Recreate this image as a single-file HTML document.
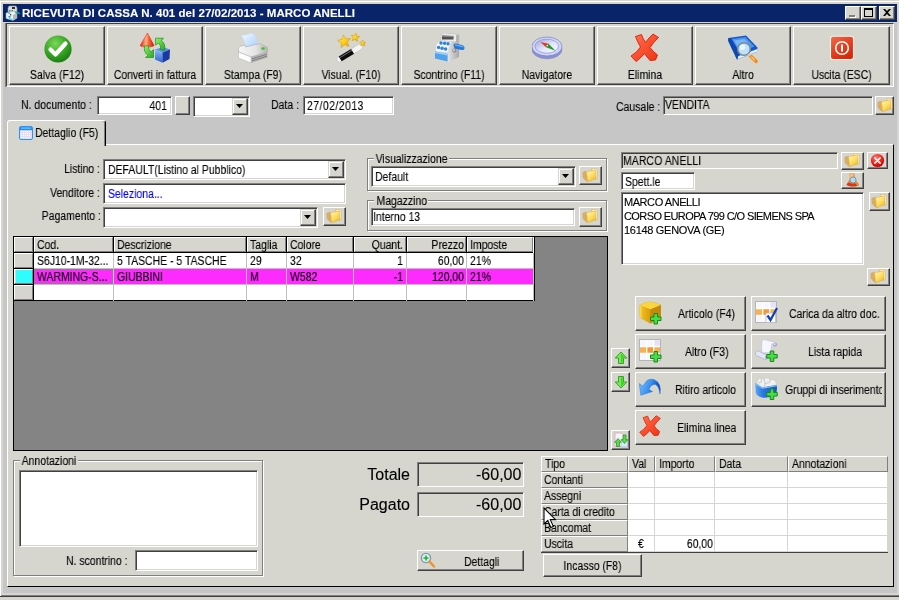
<!DOCTYPE html>
<html><head><meta charset="utf-8"><title>Ricevuta di cassa</title>
<style>
html,body{margin:0;padding:0;}
body{width:899px;height:600px;overflow:hidden;background:#d6d6ce;font-family:"Liberation Sans",sans-serif;font-size:12.5px;color:#000;position:relative;}
*{box-sizing:border-box;}
.a{position:absolute;}
.t{position:absolute;white-space:nowrap;line-height:13px;height:13px;}
.t,.gbl{transform:scaleX(.836);transform-origin:0 0;will-change:transform;-webkit-text-stroke:.12px currentColor;}
.r{text-align:right;transform-origin:100% 0;}
.c{transform-origin:50% 0;text-align:center;}
.btn{position:absolute;background:#d6d6ce;border:1px solid;border-color:#fff #404040 #404040 #fff;box-shadow:inset -1px -1px 0 #808080;}
.sk{position:absolute;background:#fff;border:1px solid;border-color:#808080 #fff #fff #808080;box-shadow:inset 1px 1px 0 #404040,inset -1px -1px 0 #d6d6ce;}
.sk.g{background:#d6d6ce;}
.gb{position:absolute;border:1px solid #808080;box-shadow:1px 1px 0 #fff,inset 1px 1px 0 #fff;}
.gbl{position:absolute;background:#d6d6ce;white-space:nowrap;line-height:13px;height:13px;padding:0 2px;}
.dd{position:absolute;background:#d6d6ce;border:1px solid;border-color:#d6d6ce #404040 #404040 #d6d6ce;box-shadow:inset -1px -1px 0 #808080,inset 1px 1px 0 #fff;}
.dd:after{content:"";position:absolute;left:3px;top:5px;width:7px;height:4px;background:#000;clip-path:polygon(0 0,100% 0,50% 100%);}
.tb{position:absolute;top:26px;height:59px;width:96px;}
.tb .t{top:42px;left:-20px;right:-20px;text-align:center;transform-origin:50% 0;}
.tb svg{position:absolute;left:32px;top:6px;}
</style></head><body>
<!-- window frame -->
<div class="a" style="left:-1px;top:0;width:902px;height:597px;border:1px solid #d6d6ce;border-bottom-color:#404040;box-shadow:inset 1px 1px 0 #fff,inset 0 -1px 0 #808080;"></div>
<!-- form bg -->
<div class="a" style="left:3px;top:23px;width:894px;height:570px;background:#c6c6c6;"></div>
<!-- title bar -->
<div class="a" id="title" style="left:3px;top:4px;width:894px;height:18px;background:#0a246a;"></div>
<div class="t" id="ttxt" style="left:22px;top:6px;height:14px;line-height:14px;color:#fff;font-weight:bold;font-size:11.5px;letter-spacing:0.04px;transform:none;">RICEVUTA DI CASSA N. 401 del 27/02/2013 - MARCO ANELLI</div>
<svg class="a" style="left:5px;top:5px" width="16" height="16" viewBox="0 0 16 16"><path d="M4 1 h7 l1 2 v4 h-9 v-4z" fill="#dcdcdc" stroke="#9a9a9a" stroke-width=".6"/><rect x="7" y="2" width="3" height="2" fill="#303030"/><path d="M1 8 L8 6 L12 8 V13 L8 15.500 L1 13.500Z" fill="#f0f0f0" stroke="#a0a0a0" stroke-width=".5"/><path d="M8 10 L12 8 V13 L8 15.500Z" fill="#b8b8b8"/><g fill="#18a0a0"><rect x="4" y="5" width="1.500" height="1.200"/><rect x="6.500" y="5" width="1.500" height="1.200"/><rect x="3.500" y="7.500" width="1.500" height="1.200"/><rect x="5" y="9" width="1.200" height="1.500" fill="#1830a0"/></g><path d="M10.500 6.500 h2 l2.500 1.500 v1.500 l-2 -1 h-2.500z" fill="#18a0a0"/><path d="M3.500 11 h2 v1.500 h-2z" fill="#2090d0"/><path d="M4 13 l3.500 .8 v1.200 l-3.500 -.8z" fill="#20f0f0"/></svg>
<!-- caption buttons -->
<div class="btn" style="left:845px;top:6px;width:16px;height:14px;"><div class="a" style="left:3px;top:8px;width:6px;height:2px;background:#808080;box-shadow:1px 1px 0 #fff"></div></div>
<div class="btn" style="left:861px;top:6px;width:16px;height:14px;"><div class="a" style="left:2px;top:1px;width:9px;height:9px;border:1px solid #000;border-top-width:2px;"></div></div>
<div class="btn" style="left:879px;top:6px;width:16px;height:14px;"><svg class="a" style="left:3px;top:2px" width="8" height="7" viewBox="0 0 8 7"><path d="M0 0h2l2 2l2-2h2l-3 3.5l3 3.5h-2l-2-2l-2 2h-2l3-3.5z" fill="#000"/></svg></div>

<!-- toolbar container -->
<div class="a" id="tbar" style="left:6px;top:23px;width:888px;height:64px;background:#d6d6ce;border:1px solid;border-color:#404040 #fff #fff #404040;box-shadow:-1px 0 0 #808080;"></div>
<div class="btn tb" style="left:9px;width:96px;"><svg class="a" style="" width="32" height="32" viewBox="0 0 32 32"><defs><radialGradient id="gs" cx=".4" cy=".3" r=".8"><stop offset="0" stop-color="#7ad85a"/><stop offset=".6" stop-color="#2f9e1e"/><stop offset="1" stop-color="#16700e"/></radialGradient></defs>
<circle cx="16" cy="16" r="13.6" fill="url(#gs)"/><path d="M8.5 16.5 L13.5 21.5 L23.5 10.5" fill="none" stroke="#fff" stroke-width="4.2" stroke-linecap="round" stroke-linejoin="round"/></svg><div class="t">Salva (F12)</div></div>
<div class="btn tb" style="left:107px;width:96px;"><svg class="a" style="" width="32" height="32" viewBox="0 0 32 32"><defs><linearGradient id="cr" x1="0" y1="0" x2="1" y2="0"><stop offset="0" stop-color="#e61a08"/><stop offset=".42" stop-color="#ffb488"/><stop offset=".6" stop-color="#ff6a3c"/><stop offset="1" stop-color="#d21000"/></linearGradient>
<linearGradient id="cg" x1="0" y1="0" x2="1" y2="1"><stop offset="0" stop-color="#98f268"/><stop offset="1" stop-color="#22a822"/></linearGradient>
<linearGradient id="cb" x1="0" y1="0" x2="0" y2="1"><stop offset="0" stop-color="#8cbcf8"/><stop offset="1" stop-color="#2e62d2"/></linearGradient></defs>
<path d="M7.400 0 L14 12.300 Q14 14 7 14 Q0 14 .3 12.300 Z" fill="url(#cr)" stroke="#d82010" stroke-width=".5"/>
<path d="M15 16.500 L23 14 L30 16.500 L22.500 19.500 Z" fill="#5a92ec"/><path d="M15 16.500 L22.500 19.500 V29.700 L15 26.500 Z" fill="url(#cb)"/><path d="M22.500 19.500 L30 16.500 L29.500 26 L22.500 29.700 Z" fill="#1838a2"/>
<path d="M15.500 5.200 H23.500 L21.500 7.500 Q26 11 24.500 17.500 L20.500 16.500 Q21.500 12.500 18.500 10 L15.500 12 Z" fill="url(#cg)" stroke="#189418" stroke-width=".7"/>
<path d="M13.500 24.500 H5.500 L7.800 22.300 Q3.500 19 4.500 13 L8.500 12.500 Q8 16.500 11 19 L13.500 16.500 Z" fill="url(#cg)" stroke="#189418" stroke-width=".7"/></svg><div class="t">Converti in fattura</div></div>
<div class="btn tb" style="left:205px;width:96px;"><svg class="a" style="" width="32" height="32" viewBox="0 0 32 32"><defs><linearGradient id="pp" x1="0" y1="0" x2="1" y2="1"><stop offset="0" stop-color="#f4faff"/><stop offset="1" stop-color="#a8d0f6"/></linearGradient>
<linearGradient id="pt" x1="0" y1="0" x2="1" y2="0"><stop offset="0" stop-color="#f6f6f6"/><stop offset=".6" stop-color="#e4e4e4"/><stop offset="1" stop-color="#b4b4b4"/></linearGradient></defs>
<path d="M3 2.500 Q8 2 13 0 Q19 .5 20 11 L7.500 14 Q6 6 3 2.500 Z" fill="url(#pp)" stroke="#c4d4e4" stroke-width=".5"/>
<path d="M.5 15 Q.5 13.500 3 13 L7 12 L7.500 14 L20 11 L21 10.500 Q26 12 29.500 14.500 V19 L13 24 L.5 19 Z" fill="url(#pt)" stroke="#a4a4a4" stroke-width=".5"/>
<path d="M.5 19 L13 24 V30 L.5 25 Z" fill="#fdfdfd" stroke="#b0b0b0" stroke-width=".5"/>
<path d="M13 24 L29.500 19 V24.500 L13 30 Z" fill="#b2b2b2"/><path d="M14 25.800 L29 21.300 M14 27.800 L29 23.200" stroke="#7a7a7a" stroke-width=".9"/>
<ellipse cx="25" cy="15.500" rx="1.900" ry="1.200" fill="#3cc42c"/></svg><div class="t">Stampa (F9)</div></div>
<div class="btn tb" style="left:303px;width:96px;"><svg class="a" style="" width="32" height="32" viewBox="0 0 32 32"><defs><linearGradient id="ws" x1="0" y1="0" x2="1" y2="1"><stop offset="0" stop-color="#fff27a"/><stop offset=".5" stop-color="#ffd21a"/><stop offset="1" stop-color="#e09a00"/></linearGradient></defs>
<g transform="rotate(-31.500 2.500 27)"><rect x="1" y="24.200" width="29" height="5.600" rx="2.600" fill="#f4f4f4" stroke="#b8b8b8" stroke-width=".5"/><rect x="4.500" y="24.200" width="14.500" height="5.600" fill="#0c0c0c"/><rect x="4.500" y="25.200" width="14.500" height="1" fill="#6a6a6a"/></g>
<path d="M7.4 1.9 L9.7 5.9 L14.4 5.6 L11.3 9.1 L13.0 13.5 L8.7 11.6 L5.1 14.6 L5.5 9.9 L1.6 7.4 L6.2 6.4Z" fill="url(#ws)" stroke="#d89a00" stroke-width=".6"/>
<path d="M19.9 -0.1 L20.7 2.9 L23.7 3.6 L21.1 5.3 L21.4 8.4 L19.0 6.4 L16.2 7.6 L17.3 4.8 L15.3 2.4 L18.3 2.6Z" fill="url(#ws)" stroke="#d89a00" stroke-width=".6"/>
<path d="M26.7 7.0 L27.6 9.1 L29.8 9.3 L28.1 10.8 L28.6 13.0 L26.7 11.8 L24.8 13.0 L25.3 10.8 L23.6 9.3 L25.8 9.1Z" fill="url(#ws)" stroke="#d89a00" stroke-width=".5"/></svg><div class="t">Visual. (F10)</div></div>
<div class="btn tb" style="left:401px;width:96px;"><svg class="a" style="" width="32" height="32" viewBox="0 0 32 32"><defs><linearGradient id="kb" x1="0" y1="0" x2="1" y2="0"><stop offset="0" stop-color="#e4e4e4"/><stop offset="1" stop-color="#a6a6a6"/></linearGradient></defs>
<path d="M7 1.500 L10 0 L25 1.500 V10 L22 9 L7 8 Z" fill="#ececec" stroke="#b4b4b4" stroke-width=".5"/><path d="M22 2 L25 1.500 V10 L22 9 Z" fill="#b4b4b4"/>
<path d="M8 2.600 L19.500 3.100 V6.600 L8 6.400 Z" fill="#505050"/><path d="M8 2.600 L19.500 3.100 V4.200 L8 3.800 Z" fill="#8a8a8a"/>
<path d="M14 20 Q15 12 18 9 L22 9 L25 10 V24 L14 29 Z" fill="url(#kb)"/>
<path d="M2 12 Q4 8 8 7.500 L18 9 Q15 12 14 20 L1.500 18.500 Z" fill="#f4f4f4" stroke="#c4c4c4" stroke-width=".4"/>
<g fill="#2a82e4"><circle cx="7" cy="10" r="1.700"/><circle cx="10.600" cy="10.200" r="1.700"/><circle cx="14" cy="10.800" r="1.700"/><circle cx="4.600" cy="14.400" r="1.700"/><circle cx="8.100" cy="15.300" r="1.700"/><circle cx="11.600" cy="16" r="1.700"/></g>
<path d="M1 18.500 L13.500 21 V28.500 L1 25.500 Z" fill="#4ea2ee"/><path d="M1 18.500 L13.500 21 V22.600 L1 20 Z" fill="#9cd0ff"/>
<circle cx="20.300" cy="17.600" r="2.100" fill="#8e8e8e"/><circle cx="19.900" cy="17.200" r="1" fill="#dcdcdc"/>
<path d="M19.500 12 Q19.500 10.500 21.500 10.500 L28 12 Q30.800 13 30.500 15.500 Q30 17.500 27.500 17 L20.500 15.500 Z" fill="#2a78d6"/><path d="M21 11.300 L28 12.800 Q29.500 13.400 29.600 14.400 L21 12.600 Z" fill="#6ab0f4"/></svg><div class="t">Scontrino (F11)</div></div>
<div class="btn tb" style="left:499px;width:96px;"><svg class="a" style="" width="32" height="32" viewBox="0 0 32 32"><defs><linearGradient id="nv" x1="0" y1="0" x2="1" y2="1"><stop offset="0" stop-color="#9ea2d8"/><stop offset=".55" stop-color="#e4e6fc"/><stop offset="1" stop-color="#fafaff"/></linearGradient></defs>
<ellipse cx="15" cy="16.300" rx="15" ry="9.500" fill="#8a90d4" stroke="#6a70c0" stroke-width=".5"/><ellipse cx="15" cy="13.500" rx="15" ry="9.500" fill="#d0d4f6" stroke="#7a80c8" stroke-width=".7"/>
<ellipse cx="14.700" cy="13.200" rx="11.800" ry="7" fill="url(#nv)" stroke="#8a90cc" stroke-width=".7"/>
<path d="M8.500 9 L16.500 10.800 L14 14.300 Z" fill="#e8341e"/><path d="M23.500 17.800 L16.500 10.800 L14 14.300 Z" fill="#1e9a26"/><circle cx="15.300" cy="12.500" r=".8" fill="#f4f4f4"/></svg><div class="t">Navigatore</div></div>
<div class="btn tb" style="left:597px;width:96px;"><svg class="a" style="" width="32" height="32" viewBox="0 0 32 32"><defs><linearGradient id="bx" x1="0" y1="0" x2="1" y2="1"><stop offset="0" stop-color="#ff7452"/><stop offset=".5" stop-color="#fa5030"/><stop offset="1" stop-color="#ea3412"/></linearGradient></defs>
<path d="M5.500 3.500 L11.500 1.500 Q13 6 15.500 9.500 Q19 4.500 23 1 L28.500 4.500 Q23.500 9 20 14.500 Q23 18.500 27.500 22 L25.500 27 L20 27.500 Q17 24 14.500 20.500 Q10.500 25.500 6 28.500 L1 23 Q7 19.500 10.500 14 Q7.500 9 5.500 3.500 Z" fill="url(#bx)" stroke="#d81c08" stroke-width=".9" stroke-linejoin="round"/></svg><div class="t">Elimina</div></div>
<div class="btn tb" style="left:695px;width:96px;"><svg class="a" style="" width="32" height="32" viewBox="0 0 32 32"><path d="M.3 5 L18 2.500 L29.500 14.500 L29 19 L9 26.500 L.3 8 Z" fill="#1458c8"/><path d="M3.500 6 L17.500 4 L26.500 13.500 L11.500 19.500 Z" fill="#4a94f0"/><path d="M6 7.500 L16.500 6 L22 12 L11 16 Z" fill="#78b4f8"/><path d="M10 23.300 L29.300 16 V18.700 L9.500 26.300Z" fill="#e4ecf8"/><path d="M.3 5 L3.500 6 L11.500 19.500 L9 26.500 L.3 8Z" fill="#0e48b0"/>
<circle cx="16" cy="16" r="6.300" fill="#bfe2f8" stroke="#7c8894" stroke-width="1.500"/><circle cx="14.500" cy="14.300" r="2.800" fill="#e8f6ff"/>
<path d="M21.800 22.300 L28 28.300" stroke="#f48a1a" stroke-width="3.600" stroke-linecap="round"/><path d="M23.300 23.800 L26.800 27.200" stroke="#ffd27a" stroke-width="1.200"/><path d="M20.600 20.900 L22.400 22.700" stroke="#d0d0d0" stroke-width="3.200"/></svg><div class="t">Altro</div></div>
<div class="btn tb" style="left:793px;width:97px;"><svg class="a" style="" width="32" height="32" viewBox="0 0 32 32"><defs><linearGradient id="ex" x1="0" y1="0" x2=".6" y2="1"><stop offset="0" stop-color="#f26c4c"/><stop offset=".5" stop-color="#e64424"/><stop offset="1" stop-color="#d62a0a"/></linearGradient></defs>
<rect x="4.500" y="3.300" width="23" height="23.200" rx="2.500" fill="url(#ex)" stroke="#fdf4f0" stroke-width="1.100"/><circle cx="16" cy="15" r="6.300" fill="none" stroke="#fff" stroke-width="1.600"/><rect x="15" y="11.500" width="2" height="7" fill="#fff"/></svg><div class="t">Uscita (ESC)</div></div>
<!-- doc row -->
<div class="t" style="left:21px;top:99px;">N. documento :</div>
<div class="sk" style="left:97px;top:96px;width:75px;height:19px;"><div class="t r" style="right:4px;top:3px;">401</div></div>
<div class="btn" style="left:175px;top:96px;width:15px;height:19px;"></div>
<div class="sk" style="left:193px;top:96px;width:57px;height:21px;"><div class="dd" style="right:1px;top:1px;width:16px;height:17px;"></div></div>
<div class="t" style="left:271px;top:99px;">Data :</div>
<div class="sk" style="left:303px;top:96px;width:91px;height:19px;"><div class="t" style="left:3px;top:3px;letter-spacing:.55px">27/02/2013</div></div>
<div class="t" style="left:616px;top:101px;">Causale :</div>
<div class="sk g" style="left:663px;top:96px;width:210px;height:19px;box-shadow:inset 1px 1px 0 #404040;"><div class="t" style="left:1px;top:2px;">VENDITA</div></div>
<div class="btn" style="left:875px;top:96px;width:19px;height:19px;"><svg class="a" style="left:1px;top:1px" width="16" height="16" viewBox="0 0 16 16"><defs><linearGradient id="fgx1" x1="0" y1="0" x2=".7" y2="1"><stop offset="0" stop-color="#fff8b4"/><stop offset=".55" stop-color="#fbe068"/><stop offset="1" stop-color="#f0bc30"/></linearGradient></defs>
<path d="M9.500 .6 L15 1.100 L15.200 10.500 L13.500 11.200 Z" fill="#fffbe8" stroke="#dc9a28" stroke-width=".5"/>
<path d="M.6 4.600 L3 3 L4.500 3.600 L5.500 13.800 L3 12 L1 9.500 Z" fill="#deae50" stroke="#b4a4e8" stroke-width=".4"/>
<path d="M4.500 3.600 L13.500 2 L14 10.600 L5.500 13.800 Z" fill="url(#fgx1)" stroke="#dca42c" stroke-width=".5"/></svg></div>

<!-- tab pane -->
<div class="a" id="pane" style="left:7px;top:144px;width:887px;height:443px;background:#d6d6ce;border:1px solid;border-color:#fff #000 #000 #fff;"></div>
<!-- tab -->
<div class="a" id="tab" style="left:7px;top:120px;width:99px;height:26px;background:#d6d6ce;border:1px solid;border-color:#fff #000 #d6d6ce #fff;border-bottom:0;border-radius:3px 3px 0 0;box-shadow:inset -1px 0 0 #808080;"></div>
<div class="t" style="left:35px;top:127px;">Dettaglio (F5)</div>
<svg class="a" style="left:19px;top:126px" width="14" height="14" viewBox="0 0 14 14"><rect x=".5" y=".5" width="13" height="13" rx="1.5" fill="#e6dcf6" stroke="#2492ff"/><rect x="1" y="1" width="12" height="3.2" fill="#1e8cff"/><rect x="2" y="1.6" width="10" height="1" fill="#9cd0ff"/>
<g fill="#fff"><rect x="2" y="5" width="1" height="1"/><rect x="4" y="5" width="1" height="1"/><rect x="6" y="5" width="1" height="1"/><rect x="8" y="5" width="1" height="1"/><rect x="10" y="5" width="1" height="1"/>
<rect x="2" y="7" width="1" height="1"/><rect x="4" y="7" width="1" height="1"/><rect x="6" y="7" width="1" height="1"/><rect x="8" y="7" width="1" height="1"/><rect x="10" y="7" width="1" height="1"/>
<rect x="2" y="9" width="1" height="1"/><rect x="4" y="9" width="1" height="1"/><rect x="6" y="9" width="1" height="1"/><rect x="8" y="9" width="1" height="1"/><rect x="10" y="9" width="1" height="1"/>
<rect x="2" y="11" width="1" height="1"/><rect x="4" y="11" width="1" height="1"/><rect x="6" y="11" width="1" height="1"/><rect x="8" y="11" width="1" height="1"/><rect x="10" y="11" width="1" height="1"/></g></svg>

<!-- left fields -->
<div class="t r" style="left:20px;width:80px;top:163px;">Listino :</div>
<div class="sk" style="left:103px;top:159px;width:243px;height:21px;"><div class="t" style="left:4px;top:4px;">DEFAULT(Listino al Pubblico)</div><div class="dd" style="right:1px;top:1px;width:16px;height:17px;"></div></div>
<div class="t r" style="left:20px;width:80px;top:187px;">Venditore :</div>
<div class="sk" style="left:103px;top:183px;width:243px;height:21px;"><div class="t" style="left:4px;top:4px;color:#0000ff;">Seleziona...</div></div>
<div class="t r" style="left:20px;width:81px;top:210px;">Pagamento :</div>
<div class="sk" style="left:103px;top:207px;width:215px;height:21px;"><div class="dd" style="right:1px;top:1px;width:16px;height:17px;"></div></div>
<div class="btn" style="left:323px;top:207px;width:23px;height:19px;"><svg class="a" style="left:2px;top:1px" width="16" height="16" viewBox="0 0 16 16"><defs><linearGradient id="fgx2" x1="0" y1="0" x2=".7" y2="1"><stop offset="0" stop-color="#fff8b4"/><stop offset=".55" stop-color="#fbe068"/><stop offset="1" stop-color="#f0bc30"/></linearGradient></defs>
<path d="M9.500 .6 L15 1.100 L15.200 10.500 L13.500 11.200 Z" fill="#fffbe8" stroke="#dc9a28" stroke-width=".5"/>
<path d="M.6 4.600 L3 3 L4.500 3.600 L5.500 13.800 L3 12 L1 9.500 Z" fill="#deae50" stroke="#b4a4e8" stroke-width=".4"/>
<path d="M4.500 3.600 L13.500 2 L14 10.600 L5.500 13.800 Z" fill="url(#fgx2)" stroke="#dca42c" stroke-width=".5"/></svg></div>

<!-- group boxes -->
<div class="gb" style="left:367px;top:158px;width:240px;height:33px;"></div>
<div class="gbl" style="left:374px;top:153px;">Visualizzazione</div>
<div class="sk" style="left:371px;top:166px;width:205px;height:21px;"><div class="t" style="left:3px;top:4px;">Default</div><div class="dd" style="right:1px;top:1px;width:16px;height:17px;"></div></div>
<div class="btn" style="left:579px;top:166px;width:23px;height:19px;"><svg class="a" style="left:2px;top:1px" width="16" height="16" viewBox="0 0 16 16"><defs><linearGradient id="fgx3" x1="0" y1="0" x2=".7" y2="1"><stop offset="0" stop-color="#fff8b4"/><stop offset=".55" stop-color="#fbe068"/><stop offset="1" stop-color="#f0bc30"/></linearGradient></defs>
<path d="M9.500 .6 L15 1.100 L15.200 10.500 L13.500 11.200 Z" fill="#fffbe8" stroke="#dc9a28" stroke-width=".5"/>
<path d="M.6 4.600 L3 3 L4.500 3.600 L5.500 13.800 L3 12 L1 9.500 Z" fill="#deae50" stroke="#b4a4e8" stroke-width=".4"/>
<path d="M4.500 3.600 L13.500 2 L14 10.600 L5.500 13.800 Z" fill="url(#fgx3)" stroke="#dca42c" stroke-width=".5"/></svg></div>
<div class="gb" style="left:367px;top:200px;width:240px;height:31px;"></div>
<div class="gbl" style="left:374px;top:195px;padding:0 2px 0 3px">Magazzino</div>
<div class="sk" style="left:371px;top:208px;width:204px;height:18px;"><div class="t" style="left:1px;top:2px;">Interno 13</div></div>
<div class="btn" style="left:579px;top:207px;width:23px;height:20px;"><svg class="a" style="left:2px;top:1px" width="16" height="16" viewBox="0 0 16 16"><defs><linearGradient id="fgx4" x1="0" y1="0" x2=".7" y2="1"><stop offset="0" stop-color="#fff8b4"/><stop offset=".55" stop-color="#fbe068"/><stop offset="1" stop-color="#f0bc30"/></linearGradient></defs>
<path d="M9.500 .6 L15 1.100 L15.200 10.500 L13.500 11.200 Z" fill="#fffbe8" stroke="#dc9a28" stroke-width=".5"/>
<path d="M.6 4.600 L3 3 L4.500 3.600 L5.500 13.800 L3 12 L1 9.500 Z" fill="#deae50" stroke="#b4a4e8" stroke-width=".4"/>
<path d="M4.500 3.600 L13.500 2 L14 10.600 L5.500 13.800 Z" fill="url(#fgx4)" stroke="#dca42c" stroke-width=".5"/></svg></div>

<div class="a" style="left:13px;top:236px;width:595px;height:215px;background:#848484;border:1px solid #000;"></div>
<div class="a" style="left:13px;top:236px;width:522px;height:65px;background:#fff;border:1px solid #000;"></div>
<div class="a" style="left:14px;top:237px;width:19px;height:15px;background:#d6d6ce;border:1px solid;border-color:#fff #808080 #808080 #fff;"></div>
<div class="a" style="left:33px;top:237px;width:1px;height:15px;background:#000;"></div>
<div class="a" style="left:34px;top:237px;width:79px;height:15px;background:#d6d6ce;border:1px solid;border-color:#fff #808080 #808080 #fff;"></div>
<div class="a" style="left:113px;top:237px;width:1px;height:15px;background:#000;"></div>
<div class="t" style="left:37px;top:239px;">Cod.</div>
<div class="a" style="left:114px;top:237px;width:132px;height:15px;background:#d6d6ce;border:1px solid;border-color:#fff #808080 #808080 #fff;"></div>
<div class="a" style="left:246px;top:237px;width:1px;height:15px;background:#000;"></div>
<div class="t" style="left:117px;top:239px;">Descrizione</div>
<div class="a" style="left:247px;top:237px;width:39px;height:15px;background:#d6d6ce;border:1px solid;border-color:#fff #808080 #808080 #fff;"></div>
<div class="a" style="left:286px;top:237px;width:1px;height:15px;background:#000;"></div>
<div class="t" style="left:250px;top:239px;">Taglia</div>
<div class="a" style="left:287px;top:237px;width:66px;height:15px;background:#d6d6ce;border:1px solid;border-color:#fff #808080 #808080 #fff;"></div>
<div class="a" style="left:353px;top:237px;width:1px;height:15px;background:#000;"></div>
<div class="t" style="left:290px;top:239px;">Colore</div>
<div class="a" style="left:354px;top:237px;width:52px;height:15px;background:#d6d6ce;border:1px solid;border-color:#fff #808080 #808080 #fff;"></div>
<div class="a" style="left:406px;top:237px;width:1px;height:15px;background:#000;"></div>
<div class="t r" style="left:354px;width:49px;top:239px;">Quant.</div>
<div class="a" style="left:407px;top:237px;width:59px;height:15px;background:#d6d6ce;border:1px solid;border-color:#fff #808080 #808080 #fff;"></div>
<div class="a" style="left:466px;top:237px;width:1px;height:15px;background:#000;"></div>
<div class="t r" style="left:407px;width:57px;top:239px;">Prezzo</div>
<div class="a" style="left:467px;top:237px;width:66px;height:15px;background:#d6d6ce;border:1px solid;border-color:#fff #808080 #808080 #fff;"></div>
<div class="t" style="left:470px;top:239px;">Imposte</div>
<div class="a" style="left:14px;top:252px;width:519px;height:1px;background:#000;"></div>
<div class="a" style="left:14px;top:253px;width:19px;height:15px;background:#d6d6ce;border:1px solid;border-color:#fff #808080 #808080 #fff;"></div>
<div class="a" style="left:33px;top:253px;width:1px;height:16px;background:#000;"></div>
<div class="a" style="left:14px;top:268px;width:19px;height:1px;background:#000;"></div>
<div class="a" style="left:113px;top:253px;width:1px;height:16px;background:#c0c0c0;"></div>
<div class="t" style="left:37px;top:255px;">S6J10-1M-32...</div>
<div class="a" style="left:246px;top:253px;width:1px;height:16px;background:#c0c0c0;"></div>
<div class="t" style="left:117px;top:255px;">5 TASCHE - 5 TASCHE</div>
<div class="a" style="left:286px;top:253px;width:1px;height:16px;background:#c0c0c0;"></div>
<div class="t" style="left:250px;top:255px;">29</div>
<div class="a" style="left:353px;top:253px;width:1px;height:16px;background:#c0c0c0;"></div>
<div class="t" style="left:290px;top:255px;">32</div>
<div class="a" style="left:406px;top:253px;width:1px;height:16px;background:#c0c0c0;"></div>
<div class="t r" style="left:354px;width:49px;top:255px;">1</div>
<div class="a" style="left:466px;top:253px;width:1px;height:16px;background:#c0c0c0;"></div>
<div class="t r" style="left:407px;width:57px;top:255px;">60,00</div>
<div class="a" style="left:533px;top:253px;width:1px;height:16px;background:#c0c0c0;"></div>
<div class="t" style="left:470px;top:255px;">21%</div>
<div class="a" style="left:34px;top:268px;width:499px;height:1px;background:#c0c0c0;"></div>
<div class="a" style="left:34px;top:269px;width:499px;height:15px;background:#fd2bfd;"></div>
<div class="a" style="left:14px;top:269px;width:19px;height:15px;background:#d6d6ce;border:1px solid;border-color:#fff #808080 #808080 #fff;"></div>
<div class="a" style="left:33px;top:269px;width:1px;height:16px;background:#000;"></div>
<div class="a" style="left:14px;top:284px;width:19px;height:1px;background:#000;"></div>
<div class="a" style="left:16px;top:270px;width:16px;height:13px;background:#2ffcfc;"></div>
<div class="a" style="left:113px;top:269px;width:1px;height:16px;background:#c0c0c0;"></div>
<div class="t" style="left:37px;top:271px;">WARMING-S...</div>
<div class="a" style="left:246px;top:269px;width:1px;height:16px;background:#c0c0c0;"></div>
<div class="t" style="left:117px;top:271px;">GIUBBINI</div>
<div class="a" style="left:286px;top:269px;width:1px;height:16px;background:#c0c0c0;"></div>
<div class="t" style="left:250px;top:271px;">M</div>
<div class="a" style="left:353px;top:269px;width:1px;height:16px;background:#c0c0c0;"></div>
<div class="t" style="left:290px;top:271px;">W582</div>
<div class="a" style="left:406px;top:269px;width:1px;height:16px;background:#c0c0c0;"></div>
<div class="t r" style="left:354px;width:49px;top:271px;">-1</div>
<div class="a" style="left:466px;top:269px;width:1px;height:16px;background:#c0c0c0;"></div>
<div class="t r" style="left:407px;width:57px;top:271px;">120,00</div>
<div class="a" style="left:533px;top:269px;width:1px;height:16px;background:#c0c0c0;"></div>
<div class="t" style="left:470px;top:271px;">21%</div>
<div class="a" style="left:34px;top:284px;width:499px;height:1px;background:#c0c0c0;"></div>
<div class="a" style="left:14px;top:285px;width:19px;height:15px;background:#d6d6ce;border:1px solid;border-color:#fff #808080 #808080 #fff;"></div>
<div class="a" style="left:33px;top:285px;width:1px;height:16px;background:#000;"></div>
<div class="a" style="left:14px;top:300px;width:19px;height:1px;background:#000;"></div>
<div class="a" style="left:113px;top:285px;width:1px;height:16px;background:#c0c0c0;"></div>
<div class="a" style="left:246px;top:285px;width:1px;height:16px;background:#c0c0c0;"></div>
<div class="a" style="left:286px;top:285px;width:1px;height:16px;background:#c0c0c0;"></div>
<div class="a" style="left:353px;top:285px;width:1px;height:16px;background:#c0c0c0;"></div>
<div class="a" style="left:406px;top:285px;width:1px;height:16px;background:#c0c0c0;"></div>
<div class="a" style="left:466px;top:285px;width:1px;height:16px;background:#c0c0c0;"></div>
<div class="a" style="left:533px;top:285px;width:1px;height:16px;background:#c0c0c0;"></div>
<div class="a" style="left:34px;top:269px;width:79px;height:15px;border:1px dotted #30c030;"></div>
<div class="sk g" style="left:621px;top:152px;width:217px;height:17px;box-shadow:inset 1px 1px 0 #404040;"><div class="t" style="left:1px;top:2px;letter-spacing:.1px">MARCO ANELLI</div></div>
<div class="btn" style="left:841px;top:152px;width:23px;height:18px;"><svg class="a" style="left:2px;top:0px" width="16" height="16" viewBox="0 0 16 16"><defs><linearGradient id="fg20" x1="0" y1="0" x2=".7" y2="1"><stop offset="0" stop-color="#fff8b4"/><stop offset=".55" stop-color="#fbe068"/><stop offset="1" stop-color="#f0bc30"/></linearGradient></defs>
<path d="M9.500 .6 L15 1.100 L15.200 10.500 L13.500 11.200 Z" fill="#fffbe8" stroke="#dc9a28" stroke-width=".5"/>
<path d="M.6 4.600 L3 3 L4.500 3.600 L5.500 13.800 L3 12 L1 9.500 Z" fill="#deae50" stroke="#b4a4e8" stroke-width=".4"/>
<path d="M4.500 3.600 L13.500 2 L14 10.600 L5.500 13.800 Z" fill="url(#fg20)" stroke="#dca42c" stroke-width=".5"/></svg></div>
<div class="btn" style="left:867px;top:152px;width:21px;height:17px;"><svg class="a" style="left:2px;top:0px" width="15" height="15" viewBox="0 0 15 15"><defs><radialGradient id="rx" cx=".4" cy=".3" r=".8"><stop offset="0" stop-color="#ff7a6a"/><stop offset=".6" stop-color="#f01810"/><stop offset="1" stop-color="#b00000"/></radialGradient></defs>
<circle cx="7.5" cy="7.5" r="6.6" fill="url(#rx)"/><path d="M4.8 4.8 L10.2 10.2 M10.2 4.8 L4.8 10.2" stroke="#f4f0f0" stroke-width="1.700" stroke-linecap="round"/></svg></div>
<div class="sk" style="left:621px;top:172px;width:74px;height:18px;"><div class="t" style="left:3px;top:3px;">Spett.le</div></div>
<div class="btn" style="left:841px;top:172px;width:23px;height:17px;"><svg class="a" style="left:3px;top:0px" width="16" height="15" viewBox="0 0 16 15"><path d="M4 0.5 h5.5 v5 l4.5 6.5 q-5 3 -12.5 0 l3.5 -6.5z" fill="#f08030"/><path d="M4.5 0.8 h4 v5 h-4z" fill="#f8c080"/><path d="M1.5 12 q6 3 12.5 0 l-1.5 -2.5 q-5 2 -9.500 0z" fill="#d83818"/>
<circle cx="8" cy="7" r="3.1" fill="#a8dcf8" stroke="#8a8f98" stroke-width="1"/><path d="M10.5 9.5 l3 3" stroke="#e8a030" stroke-width="1.6"/></svg></div>
<div class="sk" style="left:621px;top:192px;width:243px;height:73px;"><div class="t" style="left:2px;top:2px;line-height:14px;height:auto;font-size:11px;transform:none"><span style="letter-spacing:-.44px">MARCO ANELLI</span><br><span style="letter-spacing:-.6px">CORSO EUROPA 799 C/O SIEMENS SPA</span><br><span style="letter-spacing:-.3px">16148 GENOVA (GE)</span></div></div>
<div class="btn" style="left:869px;top:192px;width:21px;height:19px;"><svg class="a" style="left:1px;top:1px" width="16" height="16" viewBox="0 0 16 16"><defs><linearGradient id="fg11" x1="0" y1="0" x2=".7" y2="1"><stop offset="0" stop-color="#fff8b4"/><stop offset=".55" stop-color="#fbe068"/><stop offset="1" stop-color="#f0bc30"/></linearGradient></defs>
<path d="M9.500 .6 L15 1.100 L15.200 10.500 L13.500 11.200 Z" fill="#fffbe8" stroke="#dc9a28" stroke-width=".5"/>
<path d="M.6 4.600 L3 3 L4.500 3.600 L5.500 13.800 L3 12 L1 9.500 Z" fill="#deae50" stroke="#b4a4e8" stroke-width=".4"/>
<path d="M4.500 3.600 L13.500 2 L14 10.600 L5.500 13.800 Z" fill="url(#fg11)" stroke="#dca42c" stroke-width=".5"/></svg></div>
<div class="btn" style="left:867px;top:268px;width:23px;height:18px;"><svg class="a" style="left:2px;top:0px" width="16" height="16" viewBox="0 0 16 16"><defs><linearGradient id="fg20" x1="0" y1="0" x2=".7" y2="1"><stop offset="0" stop-color="#fff8b4"/><stop offset=".55" stop-color="#fbe068"/><stop offset="1" stop-color="#f0bc30"/></linearGradient></defs>
<path d="M9.500 .6 L15 1.100 L15.200 10.500 L13.500 11.200 Z" fill="#fffbe8" stroke="#dc9a28" stroke-width=".5"/>
<path d="M.6 4.600 L3 3 L4.500 3.600 L5.500 13.800 L3 12 L1 9.500 Z" fill="#deae50" stroke="#b4a4e8" stroke-width=".4"/>
<path d="M4.500 3.600 L13.500 2 L14 10.600 L5.500 13.800 Z" fill="url(#fg20)" stroke="#dca42c" stroke-width=".5"/></svg></div>
<div class="btn" style="left:635px;top:296px;width:111px;height:35px;"><svg class="a" style="left:3px;top:4px" width="24" height="24" viewBox="0 0 24 24"><defs><linearGradient id="cu" x1="0" y1="0" x2="1" y2="0"><stop offset="0" stop-color="#ffe25a"/><stop offset=".3" stop-color="#eeb818"/><stop offset="1" stop-color="#d89c10"/></linearGradient></defs>
<path d="M.5 4.500 Q5 1 11 .8 Q17 1 22 4 V16 L11.500 22.500 L.8 16.500Z" fill="#c88a08"/><path d="M.5 4.500 Q5 1 11 .8 Q17 1 22 4 L11.500 8.500Z" fill="#f8d640"/><path d="M11.500 8.500 L22 4 V16 L11.500 22.500Z" fill="#c48a0c"/><path d="M.5 4.500 L11.500 8.500 V22.500 L.8 16.500Z" fill="url(#cu)"/><path d="M11.5 16h3.500v-3.500h3.500v3.500h3.500v3.500h-3.500v3.500h-3.500v-3.500h-3.500z" fill="#48dc48" stroke="#168a16" stroke-width="1"/></svg><div class="t" style="left:42px;top:11px;">Articolo (F4)</div></div>
<div class="btn" style="left:635px;top:334px;width:111px;height:35px;"><svg class="a" style="left:3px;top:4px" width="24" height="24" viewBox="0 0 24 24"><rect x=".5" y=".5" width="21" height="21" fill="#f6f6fc" stroke="#b4b4bc" stroke-width="1"/><rect x="1" y="7.500" width="20" height="7" fill="#fab050"/><rect x="8" y="7.500" width="7" height="7" fill="#f49a34"/><rect x="15" y="1" width="6" height="6.500" fill="#e4e4f6"/>
<path d="M7.700 1V21M14.700 1V21M1 7.500H21M1 14.500H21" stroke="#fff" stroke-width="1.300"/><path d="M11.5 16h3.500v-3.500h3.500v3.500h3.500v3.500h-3.500v3.500h-3.500v-3.500h-3.500z" fill="#48dc48" stroke="#168a16" stroke-width="1"/></svg><div class="t" style="left:49px;top:11px;">Altro (F3)</div></div>
<div class="btn" style="left:635px;top:372px;width:111px;height:35px;"><svg class="a" style="left:3px;top:4px" width="24" height="24" viewBox="0 0 24 24"><defs><linearGradient id="rt" x1="0" y1="0" x2="1" y2=".3"><stop offset="0" stop-color="#7cc0ff"/><stop offset=".55" stop-color="#3a92f0"/><stop offset="1" stop-color="#0c44b4"/></linearGradient></defs>
<path d="M21 17 Q23 6 15 2.500 Q8 1 5.500 7 L3.500 9 L.3 6.500 L1.800 18.300 L13.500 14.500 L10 12.500 Q12 7 16.500 7.500 Q20 9 21 17 Z" fill="url(#rt)" stroke="#2a78dc" stroke-width=".5"/></svg><div class="t" style="left:39px;top:11px;">Ritiro articolo</div></div>
<div class="btn" style="left:635px;top:410px;width:111px;height:35px;"><svg class="a" style="left:3px;top:4px" width="24" height="24" viewBox="0 0 24 24"><defs><linearGradient id="bx2" x1="0" y1="0" x2="1" y2="1"><stop offset="0" stop-color="#ff7452"/><stop offset=".5" stop-color="#fa5030"/><stop offset="1" stop-color="#ea3412"/></linearGradient></defs>
<g transform="scale(.75)"><path d="M5.500 3.500 L11.500 1.500 Q13 6 15.500 9.500 Q19 4.500 23 1 L28.500 4.500 Q23.500 9 20 14.500 Q23 18.500 27.500 22 L25.500 27 L20 27.500 Q17 24 14.500 20.500 Q10.500 25.500 6 28.500 L1 23 Q7 19.500 10.500 14 Q7.500 9 5.500 3.500 Z" fill="url(#bx2)" stroke="#d81c08" stroke-width="1" stroke-linejoin="round"/></g></svg><div class="t" style="left:41px;top:11px;">Elimina linea</div></div>
<div class="btn" style="left:751px;top:296px;width:135px;height:35px;"><svg class="a" style="left:3px;top:4px" width="24" height="24" viewBox="0 0 24 24"><rect x=".5" y=".5" width="21" height="21" fill="#f6f6fc" stroke="#b4b4bc" stroke-width="1"/><rect x="1" y="7.500" width="20" height="7" fill="#fab050"/><rect x="8" y="7.500" width="7" height="7" fill="#f49a34"/><rect x="15" y="1" width="6" height="6.500" fill="#e4e4f6"/>
<path d="M7.700 1V21M14.700 1V21M1 7.500H21M1 14.500H21" stroke="#fff" stroke-width="1.300"/><rect x="11" y="12" width="9.500" height="9.500" fill="#fff" stroke="#b8b8c4" stroke-width=".8"/><path d="M12.500 14.500 L15.500 19 L22 7" fill="none" stroke="#1440c0" stroke-width="2.300"/></svg><div class="t" style="left:37px;top:11px;">Carica da altro doc.</div></div>
<div class="btn" style="left:751px;top:334px;width:135px;height:35px;"><svg class="a" style="left:3px;top:4px" width="24" height="24" viewBox="0 0 24 24"><path d="M7 1 Q10 0 13 1.500 L19 3 Q21.500 3.500 22 6 Q20 8 18 6.500 L17 4.500 L15.500 13.500 L7 14 Q6 7 7 1Z" fill="#f6f6fd" stroke="#c0c4dc" stroke-width=".7"/><circle cx="20" cy="5.600" r="2.100" fill="#a4aad6"/><circle cx="19.600" cy="5.200" r=".9" fill="#e8eaf8"/>
<path d="M.5 14 Q1 11.500 3.500 12 L12 16.500 Q13.500 18 12 20 Q10.500 21 9 20 L1.500 16.500 Q0 15.500 .5 14Z" fill="#e6e8f8" stroke="#a8acca" stroke-width=".7"/><ellipse cx="11.300" cy="18.600" rx="1.300" ry="1.800" fill="#aeb2d4" transform="rotate(-25 11.300 18.600)"/><path d="M11.75 15.5h3.500v-3.500h3.500v3.500h3.500v3.500h-3.500v3.500h-3.500v-3.500h-3.500z" fill="#48dc48" stroke="#168a16" stroke-width="1"/></svg><div class="t" style="left:56px;top:11px;">Lista rapida</div></div>
<div class="btn" style="left:751px;top:372px;width:135px;height:35px;overflow:hidden;"><svg class="a" style="left:3px;top:4px" width="24" height="24" viewBox="0 0 24 24"><defs><linearGradient id="gt" x1="0" y1="0" x2="1" y2="0"><stop offset="0" stop-color="#5aa6f8"/><stop offset=".35" stop-color="#2a78e0"/><stop offset="1" stop-color="#1656c4"/></linearGradient></defs>
<path d="M1.500 6.500 L3 2 L6 .5 L9 2.500 L10.500 .8 L14 1 L15 3 L19 2.500 L21 5 L21.500 8 L7.500 10.800 Z" fill="#f0f0f0" stroke="#c2c2c2" stroke-width=".6"/><path d="M6 .5 L6.500 5 L3 6 M9 2.500 L10 6.500 L14.500 5.500 L15 3 M10 6.500 L9.500 10" fill="none" stroke="#b8b8b8" stroke-width=".7"/>
<path d="M.3 6 Q0 5.500 1 6.500 L7.500 10.500 L22 8 Q22.300 13 21 17.500 Q14 21.500 7 20.500 Q2 19 .8 16 Z" fill="url(#gt)"/><path d="M.3 6 L7.500 10.500 L22 8 L22 9.300 L7.500 11.800 L.4 7.400Z" fill="#86c0fa"/><path d="M11.75 15.5h3.500v-3.500h3.500v3.500h3.500v3.500h-3.500v3.500h-3.500v-3.500h-3.500z" fill="#48dc48" stroke="#168a16" stroke-width="1"/></svg><div class="t" style="left:33px;top:11px;width:116px;overflow:hidden;">Gruppi di inserimento</div></div>
<div class="btn" style="left:611px;top:348px;width:19px;height:20px;"><svg class="a" style="left:1px;top:1px" width="16" height="16" viewBox="0 0 16 16"><path d="M8 2 L13.800 8 H10.500 V13.500 H5.500 V8 H2.200 Z" fill="#74ea54" stroke="#2aa01c" stroke-width=".9"/><path d="M8 3.500 L11.500 7.300 H9.500 V12.700 H8Z" fill="#40cc2c"/></svg></div>
<div class="btn" style="left:611px;top:372px;width:19px;height:20px;"><svg class="a" style="left:1px;top:1px" width="16" height="16" viewBox="0 0 16 16"><path d="M8 14 L13.800 8 H10.500 V2.500 H5.500 V8 H2.200 Z" fill="#74ea54" stroke="#2aa01c" stroke-width=".9"/><path d="M8 12.500 L11.500 8.700 H9.500 V3.300 H8Z" fill="#40cc2c"/></svg></div>
<div class="btn" style="left:611px;top:430px;width:19px;height:20px;"><svg class="a" style="left:1px;top:1px" width="16" height="16" viewBox="0 0 16 16"><path d="M2 1 h6.500 l3 3 v10.500 h-9.500z" fill="#f6f4fa" stroke="#dca4bc" stroke-width=".8"/><path d="M8 7.500 h6.500 v7.500 h-6.500z" fill="#dce8fa" stroke="#9ab0d4" stroke-width=".6"/><path d="M5 6.500 L8.300 10.300 H6.500 V14.500 H3.500 V10.300 H1.700Z" fill="#58dc44" stroke="#1c901c" stroke-width=".7"/><path d="M11.500 11.500 L14.800 7.700 H13 V3 H10 V7.700 H8.200Z" fill="#58dc44" stroke="#1c901c" stroke-width=".7"/></svg></div>
<div class="gb" style="left:13px;top:460px;width:250px;height:116px;"></div>
<div class="gbl" style="left:20px;top:455px;">Annotazioni</div>
<div class="sk" style="left:19px;top:470px;width:239px;height:77px;"></div>
<div class="t" style="left:66px;top:555px;">N. scontrino :</div>
<div class="sk" style="left:135px;top:550px;width:123px;height:21px;"></div>
<div class="t r" style="left:340px;width:70px;top:465px;font-size:16px;height:20px;line-height:20px;transform:none;">Totale</div>
<div class="sk g" style="left:417px;top:462px;width:107px;height:25px;"><div class="t r" style="right:2px;top:2px;font-size:16px;height:20px;line-height:20px;transform:none;">-60,00</div></div>
<div class="t r" style="left:340px;width:70px;top:495px;font-size:16px;height:20px;line-height:20px;transform:none;">Pagato</div>
<div class="sk g" style="left:417px;top:492px;width:107px;height:25px;"><div class="t r" style="right:2px;top:2px;font-size:16px;height:20px;line-height:20px;transform:none;">-60,00</div></div>
<div class="btn" style="left:417px;top:550px;width:107px;height:21px;"><svg class="a" style="left:2px;top:1px" width="16" height="16" viewBox="0 0 16 16"><circle cx="6" cy="6" r="4.600" fill="#d8f0fa" stroke="#8a98a8" stroke-width="1.400"/><path d="M3.500 6h5M6 3.500v5" stroke="#28b428" stroke-width="1.600"/><path d="M9.500 9.500 L14 14.500" stroke="#f09030" stroke-width="2.400" stroke-linecap="round"/></svg><div class="t" style="left:46px;top:5px;">Dettagli</div></div>
<div class="a" style="left:541px;top:456px;width:347px;height:96px;background:#fff;"></div>
<div class="a" style="left:541px;top:456px;width:87px;height:16px;background:#d6d6ce;border:1px solid;border-color:#fff #808080 #808080 #fff;"></div>
<div class="t" style="left:545px;top:458px;">Tipo</div>
<div class="a" style="left:628px;top:456px;width:27px;height:16px;background:#d6d6ce;border:1px solid;border-color:#fff #808080 #808080 #fff;"></div>
<div class="t" style="left:632px;top:458px;">Val</div>
<div class="a" style="left:655px;top:456px;width:60px;height:16px;background:#d6d6ce;border:1px solid;border-color:#fff #808080 #808080 #fff;"></div>
<div class="t" style="left:659px;top:458px;">Importo</div>
<div class="a" style="left:715px;top:456px;width:73px;height:16px;background:#d6d6ce;border:1px solid;border-color:#fff #808080 #808080 #fff;"></div>
<div class="t" style="left:719px;top:458px;">Data</div>
<div class="a" style="left:788px;top:456px;width:100px;height:16px;background:#d6d6ce;border:1px solid;border-color:#fff #808080 #808080 #fff;"></div>
<div class="t" style="left:792px;top:458px;">Annotazioni</div>
<div class="a" style="left:541px;top:472px;width:87px;height:16px;background:#d6d6ce;border:1px solid;border-color:#fff #808080 #808080 #fff;"></div>
<div class="t" style="left:544px;top:474px;">Contanti</div>
<div class="a" style="left:628px;top:487px;width:260px;height:1px;background:#d6d6ce;"></div>
<div class="a" style="left:541px;top:488px;width:87px;height:16px;background:#d6d6ce;border:1px solid;border-color:#fff #808080 #808080 #fff;"></div>
<div class="t" style="left:544px;top:490px;">Assegni</div>
<div class="a" style="left:628px;top:503px;width:260px;height:1px;background:#d6d6ce;"></div>
<div class="a" style="left:541px;top:504px;width:87px;height:16px;background:#d6d6ce;border:1px solid;border-color:#fff #808080 #808080 #fff;"></div>
<div class="t" style="left:544px;top:506px;">Carta di credito</div>
<div class="a" style="left:628px;top:519px;width:260px;height:1px;background:#d6d6ce;"></div>
<div class="a" style="left:541px;top:520px;width:87px;height:16px;background:#d6d6ce;border:1px solid;border-color:#fff #808080 #808080 #fff;"></div>
<div class="t" style="left:544px;top:522px;">Bancomat</div>
<div class="a" style="left:628px;top:535px;width:260px;height:1px;background:#d6d6ce;"></div>
<div class="a" style="left:541px;top:536px;width:87px;height:16px;background:#d6d6ce;border:1px solid;border-color:#fff #808080 #808080 #fff;"></div>
<div class="t" style="left:544px;top:538px;">Uscita</div>
<div class="a" style="left:628px;top:551px;width:260px;height:1px;background:#d6d6ce;"></div>
<div class="a" style="left:654px;top:472px;width:1px;height:80px;background:#d6d6ce;"></div>
<div class="a" style="left:714px;top:472px;width:1px;height:80px;background:#d6d6ce;"></div>
<div class="a" style="left:787px;top:472px;width:1px;height:80px;background:#d6d6ce;"></div>
<div class="a" style="left:887px;top:472px;width:1px;height:80px;background:#d6d6ce;"></div>
<div class="a" style="left:541px;top:552px;width:347px;height:1px;background:#404040;"></div>
<div class="t" style="left:638px;top:538px;">€</div>
<div class="t r" style="left:655px;width:58px;top:538px;">60,00</div>
<div class="btn" style="left:543px;top:554px;width:99px;height:23px;"><div class="t c" style="left:0;right:0;top:5px;">Incasso (F8)</div></div>
<svg class="a" style="left:543px;top:507px" width="14" height="22" viewBox="0 0 14 22"><path d="M1 1 V17 L4.800 13.500 L7.800 20.500 L10.300 19.400 L7.300 12.600 H12.500 Z" fill="#fff" stroke="#000" stroke-width="1.100"/></svg>
</body></html>
